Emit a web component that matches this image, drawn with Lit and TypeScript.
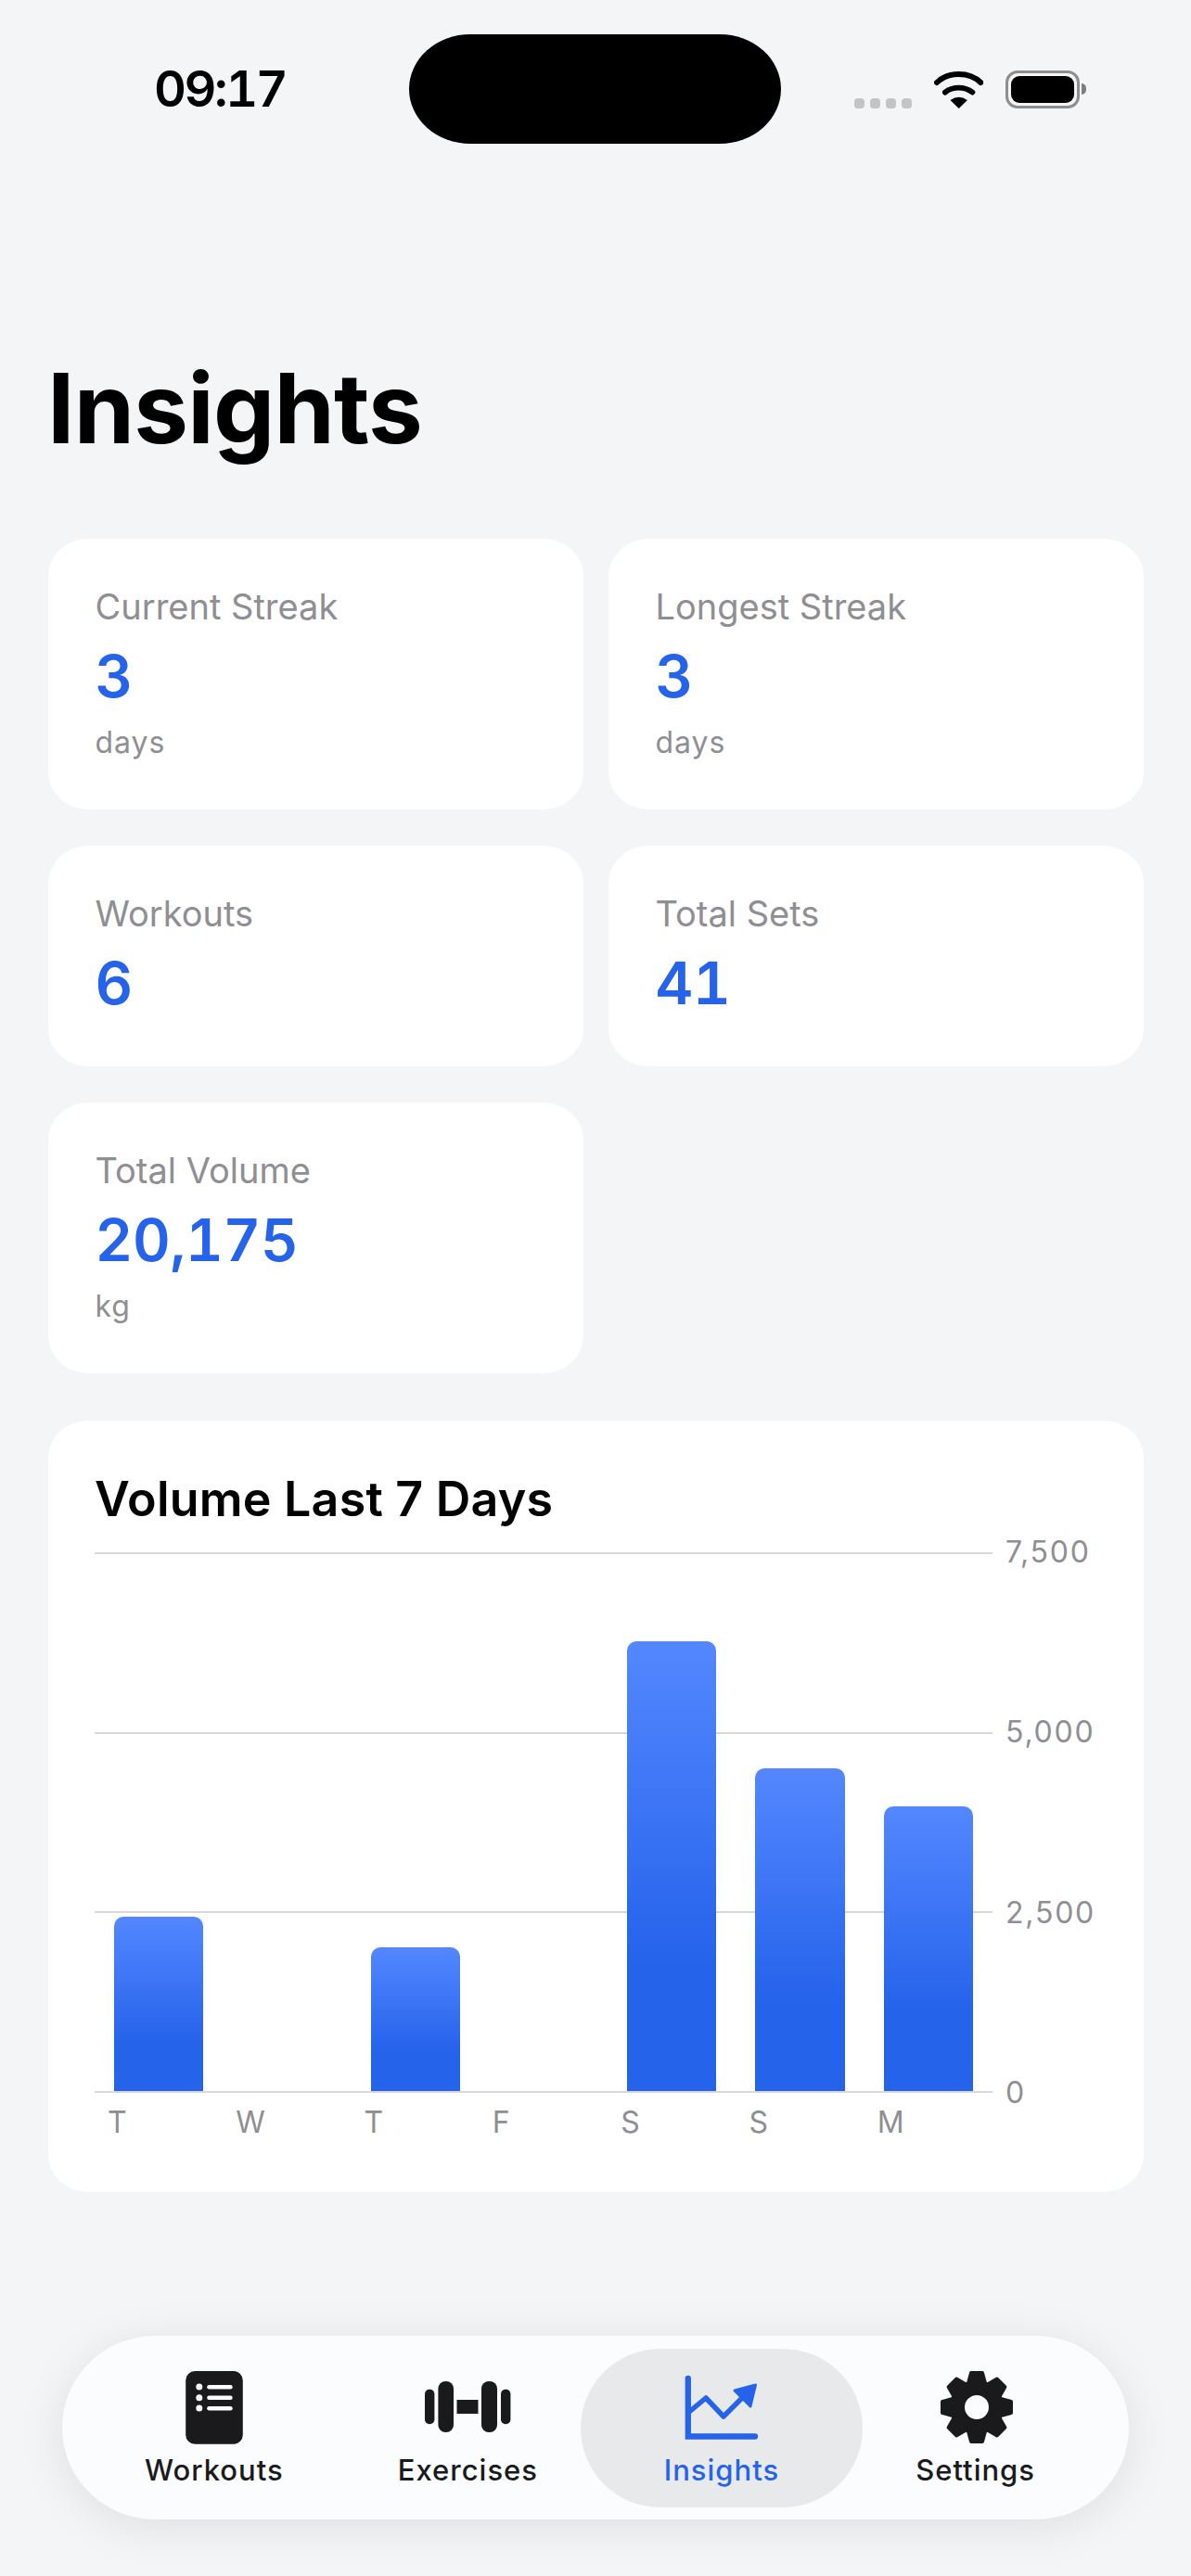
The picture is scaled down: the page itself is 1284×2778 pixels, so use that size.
import { LitElement, html, css, svg } from "lit";
import { customElement } from "lit/decorators.js";

const stats = [
  { label: "Current Streak", value: "3", unit: "days" },
  { label: "Longest Streak", value: "3", unit: "days" },
  { label: "Workouts", value: "6", unit: "" },
  { label: "Total Sets", value: "41", unit: "" },
  { label: "Total Volume", value: "20,175", unit: "kg" },
];

const days = [
  { d: "T", v: 2430 },
  { d: "W", v: 0 },
  { d: "T", v: 2005 },
  { d: "F", v: 0 },
  { d: "S", v: 6260 },
  { d: "S", v: 4490 },
  { d: "M", v: 3960 },
];
const MAX = 7500;
const ticks = ["7,500", "5,000", "2,500", "0"];

const iconWorkouts = svg`
  <rect x="19.2" y="2" width="61.6" height="78.7" rx="10" fill="#1a1a1c"/>
  <g fill="#fbfcfe">
    <circle cx="33.8" cy="19" r="3.5"/><circle cx="33.8" cy="30.7" r="3.5"/><circle cx="33.8" cy="42" r="3.5"/>
    <rect x="42.2" y="17" width="27.5" height="4.4" rx="2.2"/>
    <rect x="42.2" y="28.6" width="27.5" height="4.4" rx="2.2"/>
    <rect x="42.2" y="40" width="27.5" height="4.4" rx="2.2"/>
  </g>`;

const iconExercises = svg`
  <g fill="#1a1a1c">
    <rect x="4" y="21.7" width="10.4" height="37.6" rx="5"/>
    <rect x="18.4" y="13" width="16.6" height="55" rx="8"/>
    <rect x="38.5" y="33" width="23" height="15"/>
    <rect x="65" y="13" width="17" height="55" rx="8"/>
    <rect x="86" y="21.7" width="10.4" height="37.6" rx="5"/>
  </g>`;

const iconInsights = svg`
  <path d="M13.8 10V72.5H86" fill="none" stroke="#2563eb" stroke-width="6.3" stroke-linecap="round"/>
  <path d="M15 46L33 31L52 51L72 31" fill="none" stroke="#2563eb" stroke-width="5.5" stroke-linejoin="round"/>
  <path d="M64 23L86.5 17L81 40Z" fill="#2563eb" stroke="#2563eb" stroke-width="3" stroke-linejoin="round"/>`;

const iconSettings = svg`
  <g transform="translate(51 41)" fill="#1a1a1c">
    <circle r="21" fill="none" stroke="#1a1a1c" stroke-width="16"/>
    ${[0, 45, 90, 135, 180, 225, 270, 315].map(
      (a) => svg`<path transform="rotate(${a})" d="M-6 -37H6L9 -26H-9Z" stroke="#1a1a1c" stroke-width="4" stroke-linejoin="round"/>`
    )}
  </g>`;

const tabs = [
  { label: "Workouts", icon: iconWorkouts, active: false },
  { label: "Exercises", icon: iconExercises, active: false },
  { label: "Insights", icon: iconInsights, active: true },
  { label: "Settings", icon: iconSettings, active: false },
];

@customElement("app-root")
export class AppRoot extends LitElement {
  static styles = css`
    :host {
      display: block;
      height: 2778px;
      overflow: hidden;
      background: #f3f5f7;
      font-family: Inter, "Noto Sans", sans-serif;
      color: #000;
    }
    .status {
      display: grid;
      grid-template-columns: 441px 401px 1fr;
      align-items: center;
      padding-top: 37px;
    }
    .time {
      padding-left: 166px;
      font-size: 54px;
      line-height: 64px;
      font-weight: 600;
      letter-spacing: -2.4px;
      font-variant-numeric: tabular-nums;
    }
    .island {
      height: 118px;
      background: #000;
      border-radius: 66px / 59px;
    }
    .sys {
      display: flex;
      align-items: flex-end;
      gap: 24px;
      padding-left: 79px;
    }
    .dots {
      display: flex;
      gap: 6px;
    }
    .dots i {
      width: 11px;
      height: 11px;
      border-radius: 4px;
      background: #c4c4c6;
    }
    .wifi {
      display: block;
      width: 53.3px;
      height: 40px;
    }
    .battery {
      display: flex;
      align-items: center;
      gap: 2px;
    }
    .cell {
      box-sizing: border-box;
      width: 80px;
      height: 41px;
      padding: 3px;
      border: 3px solid #8e8e8e;
      border-radius: 13px;
    }
    .cell i {
      display: block;
      height: 100%;
      background: #000;
      border-radius: 9px;
    }
    .tip {
      width: 5px;
      height: 12px;
      background: #7f7f7f;
      border-radius: 0 5px 5px 0;
    }
    .title {
      margin: 221px 0 78px 51px;
      font-size: 105px;
      line-height: 127px;
      font-weight: 700;
      letter-spacing: -0.8px;
    }
    .grid {
      display: grid;
      grid-template-columns: 577px 577px;
      column-gap: 27px;
      row-gap: 39px;
      margin: 0 51.5px;
    }
    .card {
      background: #fff;
      border-radius: 44px / 40px;
    }
    .stat {
      display: flex;
      flex-direction: column;
      gap: 14px;
      padding: 50px 51px 52px;
    }
    .stat-label {
      font-size: 38px;
      line-height: 46px;
      color: #8e8e93;
    }
    .stat-value {
      font-size: 63px;
      line-height: 76px;
      font-weight: 600;
      letter-spacing: -0.3px;
      color: #2563eb;
      font-variant-numeric: tabular-nums;
    }
    .stat-unit {
      font-size: 32px;
      line-height: 40px;
      letter-spacing: 1px;
      color: #8e8e93;
    }
    .chart {
      margin: 51px 51.5px 0;
      height: 832px;
      box-sizing: border-box;
      padding: 55px 0 0 50.5px;
    }
    .chart-title {
      font-size: 52px;
      line-height: 60px;
      font-weight: 600;
      letter-spacing: 0.2px;
      height: 87px;
    }
    .chart-body {
      display: flex;
      gap: 14px;
      align-items: flex-start;
    }
    .plot-col {
      width: 968px;
    }
    .plot {
      position: relative;
      height: 583px;
      box-sizing: border-box;
      border-bottom: 2px solid #d8d8da;
    }
    .lines {
      display: grid;
      grid-template-rows: repeat(3, 1fr);
      height: 100%;
    }
    .lines div {
      border-top: 2px solid #d8d8da;
    }
    .bars {
      position: absolute;
      inset: 0;
      display: grid;
      grid-template-columns: repeat(7, 1fr);
      align-items: end;
    }
    .bar {
      margin: 0 21px;
      border-radius: 10px 10px 0 0;
      background: linear-gradient(180deg, #5487ff 0%, #2563eb 72%);
    }
    .xaxis {
      display: grid;
      grid-template-columns: repeat(7, 1fr);
      margin-top: 12px;
      font-size: 32px;
      line-height: 40px;
      color: #8e8e93;
    }
    .xaxis span {
      padding-left: 14px;
    }
    .yaxis {
      display: flex;
      flex-direction: column;
      justify-content: space-between;
      height: 623px;
      margin-top: -20px;
      font-size: 32px;
      line-height: 40px;
      letter-spacing: 1.8px;
      color: #8e8e93;
    }
    .tabbar {
      display: grid;
      grid-template-columns: repeat(4, 273.6px);
      margin: 155px 67px 0;
      height: 198px;
      box-sizing: border-box;
      padding: 36px 0 0 27px;
      background: #fbfcfe;
      border-radius: 100px / 99px;
      box-shadow: 0 8px 50px rgba(0, 0, 0, 0.09);
    }
    .tab {
      position: relative;
      display: flex;
      flex-direction: column;
      align-items: center;
      gap: 8px;
      font-size: 31px;
      line-height: 38px;
      font-weight: 500;
      letter-spacing: 1px;
      color: #1a1a1c;
    }
    .tab svg {
      position: relative;
      display: block;
      width: 100px;
      height: 82px;
    }
    .tab span {
      position: relative;
    }
    .tab.active {
      color: #2563eb;
    }
    .tab.active::before {
      content: "";
      position: absolute;
      left: -15px;
      right: -15px;
      top: -22.5px;
      height: 171px;
      background: #e8e9eb;
      border-radius: 86px;
    }
  `;

  render() {
    return html`
      <div class="status">
        <div class="time">09:17</div>
        <div class="island"></div>
        <div class="sys">
          <div class="dots"><i></i><i></i><i></i><i></i></div>
          <svg class="wifi" viewBox="0 0 53.3 40">
            <path d="M3 12C10 5 18 3 26.7 3C35 3 43 5 50.3 12" fill="none" stroke="#000" stroke-width="6" stroke-linecap="round"/>
            <path d="M12 22.5C20 16 33 16 41.3 22.5" fill="none" stroke="#000" stroke-width="6" stroke-linecap="round"/>
            <path d="M26.7 40L17.5 31Q26.7 24.5 35.9 31Z" fill="#000"/>
          </svg>
          <div class="battery"><div class="cell"><i></i></div><div class="tip"></div></div>
        </div>
      </div>
      <div class="title">Insights</div>
      <div class="grid">
        ${stats.map(
          (s) => html`<div class="card stat">
            <div class="stat-label">${s.label}</div>
            <div class="stat-value">${s.value}</div>
            ${s.unit ? html`<div class="stat-unit">${s.unit}</div>` : ""}
          </div>`
        )}
      </div>
      <div class="card chart">
        <div class="chart-title">Volume Last 7 Days</div>
        <div class="chart-body">
          <div class="plot-col">
            <div class="plot">
              <div class="lines"><div></div><div></div><div></div></div>
              <div class="bars">
                ${days.map(
                  (d) => html`<div class="bar" style="height:${(d.v / MAX) * 581}px"></div>`
                )}
              </div>
            </div>
            <div class="xaxis">${days.map((d) => html`<span>${d.d}</span>`)}</div>
          </div>
          <div class="yaxis">${ticks.map((t) => html`<div>${t}</div>`)}</div>
        </div>
      </div>
      <div class="tabbar">
        ${tabs.map(
          (t) => html`<div class="tab ${t.active ? "active" : ""}">
            <svg viewBox="0 0 100 82">${t.icon}</svg>
            <span>${t.label}</span>
          </div>`
        )}
      </div>
    `;
  }
}
